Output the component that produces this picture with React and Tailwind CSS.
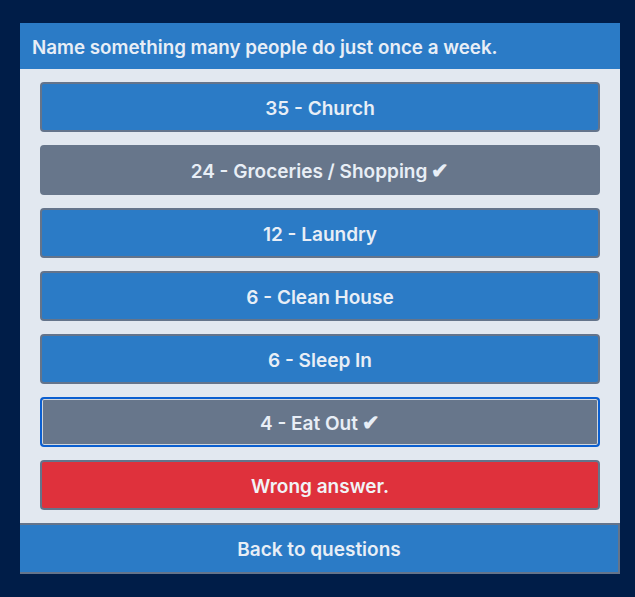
export default function App() {
  const answers = [
    { label: "35 - Church", revealed: false },
    { label: "24 - Groceries / Shopping", revealed: true },
    { label: "12 - Laundry", revealed: false },
    { label: "6 - Clean House", revealed: false },
    { label: "6 - Sleep In", revealed: false },
    { label: "4 - Eat Out", revealed: true, focused: true },
  ];

  return (
    <div
      className="min-h-[597px] bg-[#001d48] pt-[23px] px-5"
      style={{ fontFamily: "Inter, 'Noto Sans', sans-serif" }}
    >
      <div className="w-[600px] bg-[#e2e8f0]">
        <div className="h-[46px] bg-[#2b7bc6] px-3 pt-1 flex items-center text-[18.8px] font-semibold text-[#e8eef6]">
          Name something many people do just once a week.
        </div>
        <div className="flex flex-col gap-[13px] px-5 pt-[13px] pb-[13px]">
          {answers.map((a, i) => (
            <button
              key={i}
              className={
                "h-[50px] pt-1 rounded-[4px] border-2 text-[19px] font-semibold text-[#e8eef6] " +
                (a.focused
                  ? "bg-[#67768b] border-[#0b5fd0] ring-1 ring-inset ring-white/70"
                  : a.revealed
                  ? "bg-[#67768b] border-[#67768b]"
                  : "bg-[#2b7bc6] border-[#64748b]")
              }
            >
              {a.label}
              {a.revealed && <span className="ml-1 text-[21px] leading-none">✔</span>}
            </button>
          ))}
          <button className="h-[50px] pt-1 rounded-[4px] border-2 border-[#64748b] bg-[#df313c] text-[19px] font-semibold text-[#f1f3f6]">
            Wrong answer.
          </button>
        </div>
        <button className="w-full h-[51px] pt-1 bg-[#2b7bc6] border-2 border-[#64748b] border-l-0 text-[19px] font-semibold text-[#e8eef6]">
          Back to questions
        </button>
      </div>
    </div>
  );
}
